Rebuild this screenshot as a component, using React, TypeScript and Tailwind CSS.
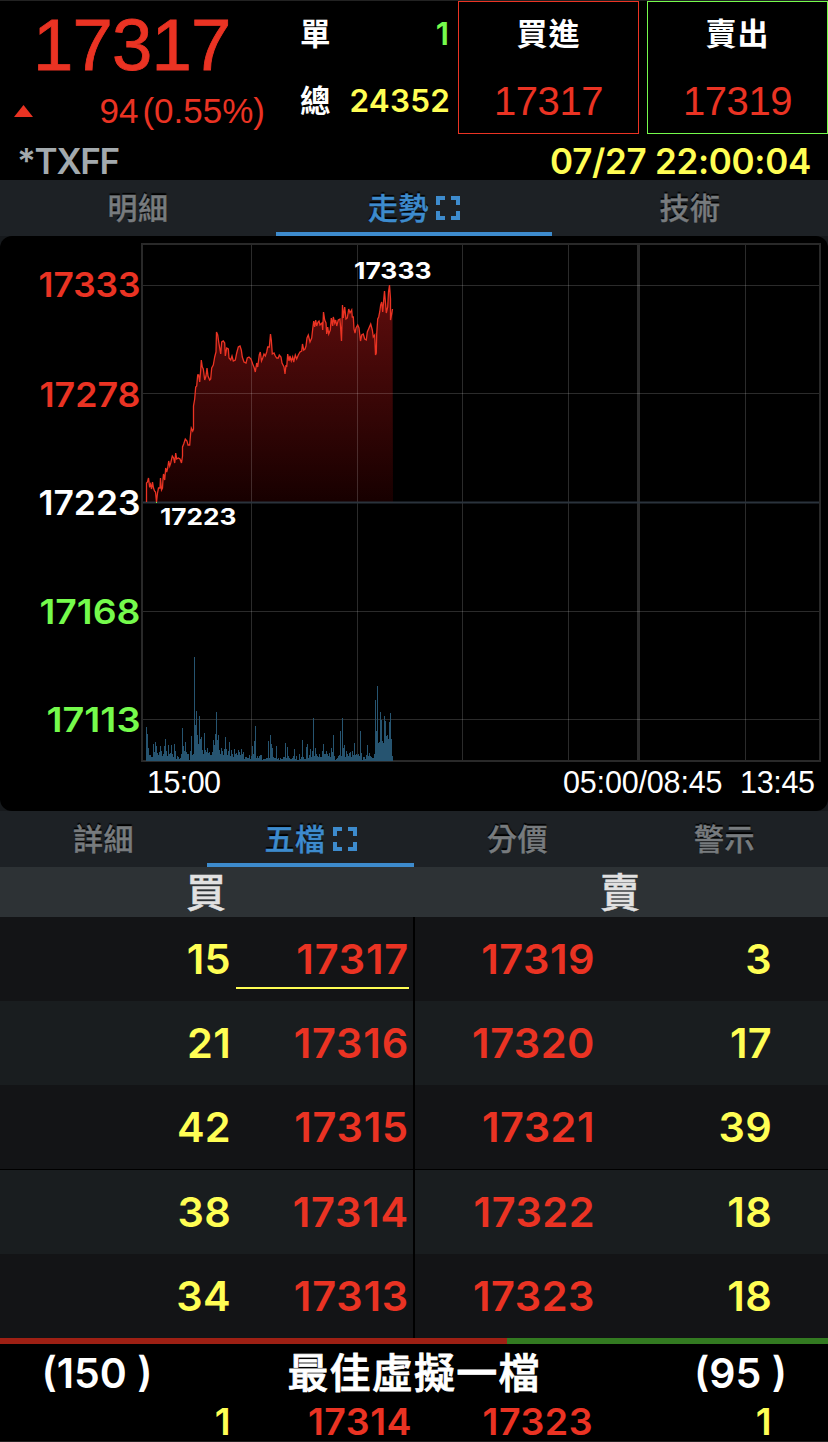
const RED = '#ea3323';

const priceLine: number[][] = [
  [146.5, 502], [146.5, 483], [147.5, 482], [148.5, 478], [149.5, 486], [150.5, 484], [151.5, 489], [152.5, 482],
  [153.5, 488], [154.5, 491], [155.5, 492], [156.5, 502], [157.5, 493], [158.5, 488], [160, 488], [160.5, 478],
  [161.5, 490], [162.5, 488], [163, 479], [163.5, 474], [164.7, 480], [165.7, 468], [166.7, 472], [167.7, 468],
  [168.7, 461], [169.7, 466], [170.7, 463], [172.3, 456], [173.7, 458], [174.7, 463], [175.7, 453], [176.7, 459],
  [178.3, 458], [180, 459], [181.5, 463], [182.5, 456], [182.5, 447], [183.7, 444], [185.3, 439], [187, 441],
  [188, 445], [189.7, 445], [190.5, 435], [191.3, 428], [192.7, 431], [193.5, 429], [193.5, 406], [194.7, 399],
  [195.7, 387], [196.7, 386], [197.7, 375], [198.7, 375], [199.7, 382], [200.7, 370], [201.3, 360], [202.3, 367],
  [203.3, 369], [204.7, 380], [206, 376], [207, 368], [208, 376], [209.7, 380], [210.7, 379], [211.7, 368],
  [213.3, 365], [214.7, 357], [216, 352], [216.5, 332], [217.7, 335], [218.7, 342], [219.7, 348], [220.7, 354],
  [221.7, 342], [223.3, 341], [224.7, 343], [225.3, 356], [226.7, 348], [228.3, 349], [229, 358], [230.7, 360],
  [232, 356], [233.3, 361], [235.3, 360], [236.7, 353], [238.3, 347], [240, 346], [241.3, 350], [242.3, 357],
  [244, 362], [246, 363], [247.3, 358], [249, 357], [251, 359], [252.7, 364], [254.3, 368], [255.3, 372],
  [256.7, 363], [257.7, 367], [259.3, 355], [260.3, 352], [261.5, 361], [262.7, 358], [264, 354], [265.3, 356],
  [266.7, 352], [267.7, 347], [269.3, 347], [270.5, 334], [271.3, 340], [272.3, 354], [274, 353], [275.3, 356],
  [276.7, 358], [278.3, 358], [279.3, 355], [281, 357], [282, 363], [284, 367], [285, 374], [286, 365],
  [286.7, 367], [287.7, 354], [289, 361], [290, 356], [291.3, 361], [292.7, 357], [293.7, 362], [295.3, 355],
  [296.7, 359], [298.3, 355], [300, 352], [301.7, 351], [302.5, 344], [303.7, 350], [305, 349], [306, 346],
  [307, 338], [308.3, 335], [310, 342], [311.7, 338], [312.7, 329], [313.7, 321], [314.7, 327], [315.7, 320],
  [316.7, 326], [318, 322], [319, 321], [320, 325], [322, 323], [322.7, 330], [323.5, 312], [324.7, 320],
  [326, 323], [326.7, 334], [327.7, 327], [328.7, 334], [330.3, 330], [331.3, 318], [332.7, 326], [333.3, 317],
  [334.7, 323], [335.7, 320], [336.7, 326], [338.3, 320], [340, 319], [341.5, 341], [342.5, 305], [343.3, 318],
  [344.7, 307], [346, 319], [347.3, 318], [348.7, 309], [350, 313], [351.7, 310], [352.3, 317], [353.3, 317],
  [354, 329], [355, 333], [356, 328], [357.7, 325], [359, 328], [360.5, 341], [361.7, 335], [363.3, 334],
  [364.7, 339], [366.3, 340], [367.3, 332], [369, 328], [370.7, 324], [372.3, 330], [373.3, 337], [374.7, 335],
  [375.5, 355], [376.3, 353], [376.7, 334], [377.7, 319], [378.7, 317], [379.7, 312], [380.7, 305], [381.7, 302],
  [382.7, 312], [383.7, 300], [384.5, 291], [385.7, 305], [386.3, 313], [387.7, 307], [388.5, 292], [389.5, 285],
  [390.5, 299], [390.5, 320], [391.7, 314], [392.5, 309],
];

// one bar per pixel column, starting at the session open
const volumes = [
  33, 26, 12, 5, 5, 3, 3, 16, 8, 18, 14, 7, 5, 8, 14, 9, 4, 6, 14, 21, 9, 4, 15, 6, 7, 15, 6, 3, 16, 9, 1, 4, 3, 1, 2, 6,
  32, 14, 9, 18, 8, 6, 6, 0, 9, 24, 5, 6, 103, 35, 49, 25, 16, 44, 21, 23, 10, 6, 27, 10, 8, 12, 7, 8, 5, 5, 8, 20, 15,
  26, 48, 20, 25, 10, 6, 12, 9, 5, 11, 23, 11, 5, 9, 18, 4, 10, 6, 3, 11, 6, 7, 5, 10, 8, 5, 11, 6, 8, 1, 3, 3, 2, 2,
  5, 1, 4, 14, 6, 19, 34, 2, 4, 2, 4, 5, 5, 0, 1, 1, 1, 2, 2, 19, 2, 25, 16, 12, 3, 2, 2, 14, 1, 2, 0, 2, 1, 1, 3, 3,
  17, 2, 13, 4, 2, 1, 1, 2, 4, 11, 1, 4, 0, 0, 6, 1, 3, 20, 3, 1, 1, 13, 16, 2, 5, 11, 3, 9, 42, 4, 12, 6, 4, 3, 6,
  3, 3, 9, 16, 6, 6, 9, 6, 4, 7, 3, 12, 8, 25, 4, 0, 1, 2, 4, 5, 29, 4, 42, 12, 15, 3, 9, 6, 4, 7, 8, 3, 9, 5, 17,
  5, 6, 5, 6, 4, 29, 7, 0, 3, 3, 1, 5, 15, 4, 7, 4, 3, 2, 2, 6, 60, 29, 74, 17, 18, 48, 40, 19, 17, 44, 39, 24, 25,
  21, 38, 47, 21, 4,
];

const priceLabels = [
  { text: '17333', y: 297, x: 38.5, w: 102, color: RED },
  { text: '17278', y: 407, x: 39.5, w: 101, color: RED },
  { text: '17223', y: 515, x: 38.5, w: 102, color: '#ffffff' },
  { text: '17168', y: 624, x: 39.5, w: 101, color: '#75fb4c' },
  { text: '17113', y: 732, x: 46.5, w: 94, color: '#75fb4c' },
];

const quotes = [
  { bidQty: '15', bid: '17317', ask: '17319', askQty: '3' },
  { bidQty: '21', bid: '17316', ask: '17320', askQty: '17' },
  { bidQty: '42', bid: '17315', ask: '17321', askQty: '39' },
  { bidQty: '38', bid: '17314', ask: '17322', askQty: '18' },
  { bidQty: '34', bid: '17313', ask: '17323', askQty: '18' },
];

function ExpandIcon() {
  return (
    <svg width="24" height="24" viewBox="0 0 24 24" fill="none" stroke="#3d8bcd" strokeWidth="4">
      <path d="M2 9V2H9M15 2H22V9M22 15V22H15M9 22H2V15" />
    </svg>
  );
}

function Tabs({ items, active }: { items: string[]; active: number }) {
  return (
    <div className="flex h-14 bg-[#1d2125]">
      {items.map((item, i) => (
        <div
          key={item}
          className={
            i === active
              ? 'flex flex-1 items-center justify-center gap-[7px] border-b-4 border-[#3d8bcd] pt-1 text-[#3d8bcd]'
              : 'flex flex-1 items-center justify-center border-b-4 border-transparent pt-1 text-[#777b7e]'
          }
        >
          <span className="text-[30px] font-medium leading-[40px] tracking-[0.5px] [-webkit-text-stroke:0.4px] [text-shadow:0_-2px_1px_#000]">
            {item}
          </span>
          {i === active && <ExpandIcon />}
        </div>
      ))}
    </div>
  );
}

function TrendChart() {
  const line = priceLine.map(([x, y]) => `${x},${y}`).join(' ');
  return (
    <svg width="828" height="575" viewBox="0 236 828 575" className="block rounded-xl bg-black">
      <defs>
        <linearGradient id="fill" x1="0" y1="285" x2="0" y2="502" gradientUnits="userSpaceOnUse">
          <stop offset="0" stopColor="#600d0d" />
          <stop offset="1" stopColor="#170000" />
        </linearGradient>
      </defs>
      <polygon points={`${line} 393,502 146,502`} fill="url(#fill)" />
      <g fill="#ffffff" fillOpacity="0.17" shapeRendering="crispEdges">
        {[251, 357, 462, 568, 745].map((x) => (
          <rect key={x} x={x} y="245" width="1" height="515" />
        ))}
        {[285, 393, 611, 719].map((y) => (
          <rect key={y} x="143" y={y} width="676" height="1" />
        ))}
        <rect x="637" y="245" width="3" height="515" />
      </g>
      <rect x="142" y="244" width="678" height="517" fill="none" stroke="#292929" strokeWidth="2" />
      <rect x="143" y="501.5" width="676" height="2" fill="#2a333c" />
      <polyline points={line} fill="none" stroke={RED} strokeWidth="1.3" />
      <rect x="156" y="502" width="1" height="1" fill="#75fb4c" />
      <g fill="#265470" shapeRendering="crispEdges">
        {volumes.map((v, i) => (
          <rect key={i} x={146 + i} y={760 - v} width="1" height={v + 1} />
        ))}
      </g>
      <g fontFamily="Inter, sans-serif" fontSize="34.5" fontWeight="560">
        {priceLabels.map((l) => (
          <text key={l.text} x={l.x} y={l.y} textLength={l.w} lengthAdjust="spacingAndGlyphs" fill={l.color}>
            {l.text}
          </text>
        ))}
      </g>
      <g fontFamily="Inter, sans-serif" fontSize="23.5" fontWeight="700" fill="#ffffff">
        <text x="354" y="279" textLength="77.500" lengthAdjust="spacingAndGlyphs">17333</text>
        <text x="160" y="525" textLength="76.500" lengthAdjust="spacingAndGlyphs">17223</text>
      </g>
      <g fontFamily="'Liberation Sans', sans-serif" fontSize="30.5" fill="#ffffff">
        <text x="147" y="793" textLength="74">15:00</text>
        <text x="563" y="793" textLength="159.500">05:00/08:45</text>
        <text x="740" y="793" textLength="75">13:45</text>
      </g>
    </svg>
  );
}

function QuoteBox({ label, price, border }: { label: string; price: string; border: string }) {
  return (
    <div className={`mt-px flex h-[133px] w-[181px] flex-col items-center border ${border}`}>
      <div className="mt-3 h-[40px] text-[31px] font-bold leading-[40px] tracking-[1px] text-white">{label}</div>
      <div className="mt-[25px] font-['Liberation_Sans'] text-[40px] leading-[44px] tracking-[-0.4px] text-[#ea3323]">
        {price}
      </div>
    </div>
  );
}

function Header() {
  return (
    <div className="h-[180px] border-t border-[#222222] bg-black">
      <div className="-mt-px flex h-[134px]">
        <div className="w-[290px] font-['Liberation_Sans'] text-[#ea3323]">
          <div className="pl-[33px] pt-[5px] text-[72.5px] leading-[80px] tracking-[-0.8px] [-webkit-text-stroke:0.8px]">
            17317
          </div>
          <div className="flex items-center pl-[14px] pt-[6px]">
            <svg width="19" height="12" viewBox="0 0 19 12">
              <path d="M9.500 0L19 12H0Z" fill="#ea3323" />
            </svg>
            <div className="flex w-[232px] justify-end gap-[4px] text-[35px] leading-[40px]">
              <span>94</span>
              <span>(0.55%)</span>
            </div>
          </div>
        </div>
        <div className="flex w-[168px] flex-col pl-[10px] pr-[8px] text-[30.5px]">
          <div className="flex h-[67px] items-center justify-between">
            <span className="font-bold text-white">單</span>
            <span className="pr-px text-[31.5px] font-[560] text-[#75fb4c]">1</span>
          </div>
          <div className="flex h-[67px] items-center justify-between">
            <span className="font-bold text-white">總</span>
            <span className="text-[31.5px] font-[560] tracking-[0.2px] text-[#fffe54]">24352</span>
          </div>
        </div>
        <QuoteBox label="買進" price="17317" border="border-[#ea3323]" />
        <div className="w-2" />
        <QuoteBox label="賣出" price="17319" border="border-[#75fb4c]" />
      </div>
      <div className="flex h-[46px] items-center justify-between px-[17px] pt-[7px] font-[560]">
        <span className="text-[35px] leading-[40px] tracking-[-1.3px] text-[#a3aaae]">*TXFF</span>
        <span className="text-[35px] leading-[40px] tracking-[-0.3px] text-[#fffe54]">07/27 22:00:04</span>
      </div>
    </div>
  );
}

export default function App() {
  return (
    <div className="h-[1442px] w-[828px] overflow-hidden bg-[#16191c] font-['Inter','Noto_Sans_CJK_TC',sans-serif]">
      <Header />
      <Tabs items={['明細', '走勢', '技術']} active={1} />
      <TrendChart />
      <Tabs items={['詳細', '五檔', '分價', '警示']} active={1} />
      <div className="flex h-[50px] bg-[#2d3235] text-center text-[40px] font-medium leading-[51px] text-[#e1e1e1] [-webkit-text-stroke:0.5px]">
        <div className="w-[412px]">買</div>
        <div className="w-[416px]">賣</div>
      </div>
      <div className="h-[421px] text-[41.5px] font-[560] leading-[84px] tracking-[0.3px]">
        {quotes.map((q, i) => (
          <div
            key={q.bid}
            className={`flex ${i % 2 ? 'bg-[#191d1f]' : 'bg-[#131416]'} ${i === 3 ? 'h-[85px] border-t border-black' : 'h-[84px]'}`}
          >
            <div className="flex w-[415px] border-r-2 border-black">
              <div className="w-[231px] text-right text-[#fffe54]">{q.bidQty}</div>
              <div
                className={`ml-[5px] w-[173px] text-right tracking-[0.8px] text-[#ea3323] ${i === 0 ? 'h-[72px] border-b-2 border-[#fffe54]' : ''}`}
              >
                {q.bid}
              </div>
            </div>
            <div className="w-[180px] text-right tracking-[0.5px] text-[#ea3323]">{q.ask}</div>
            <div className="w-[177px] text-right text-[#fffe54]">{q.askQty}</div>
          </div>
        ))}
      </div>
      <div className="flex h-[6px]">
        <div className="w-[507px] bg-[#9e2014]" />
        <div className="flex-1 bg-[#337a21]" />
      </div>
      <div className="h-[98px] border-b border-[#222222] bg-black font-[560]">
        <div className="flex h-[58px] items-center text-center text-[41px] leading-[58px] text-white">
          <div className="w-[194px]">(150 )</div>
          <div className="w-[440px] font-medium tracking-[1.2px] [-webkit-text-stroke:0.8px]">最佳虛擬一檔</div>
          <div className="w-[194px] pl-[19px]">(95 )</div>
        </div>
        <div className="mt-px flex h-[38px] text-right text-[37.5px] leading-[38px] tracking-[0.5px]">
          <div className="w-[231px] text-[#fffe54]">1</div>
          <div className="w-[181px] text-[#ea3323]">17314</div>
          <div className="w-[181px] text-[#ea3323]">17323</div>
          <div className="w-[179px] text-[#fffe54]">1</div>
        </div>
      </div>
    </div>
  );
}
